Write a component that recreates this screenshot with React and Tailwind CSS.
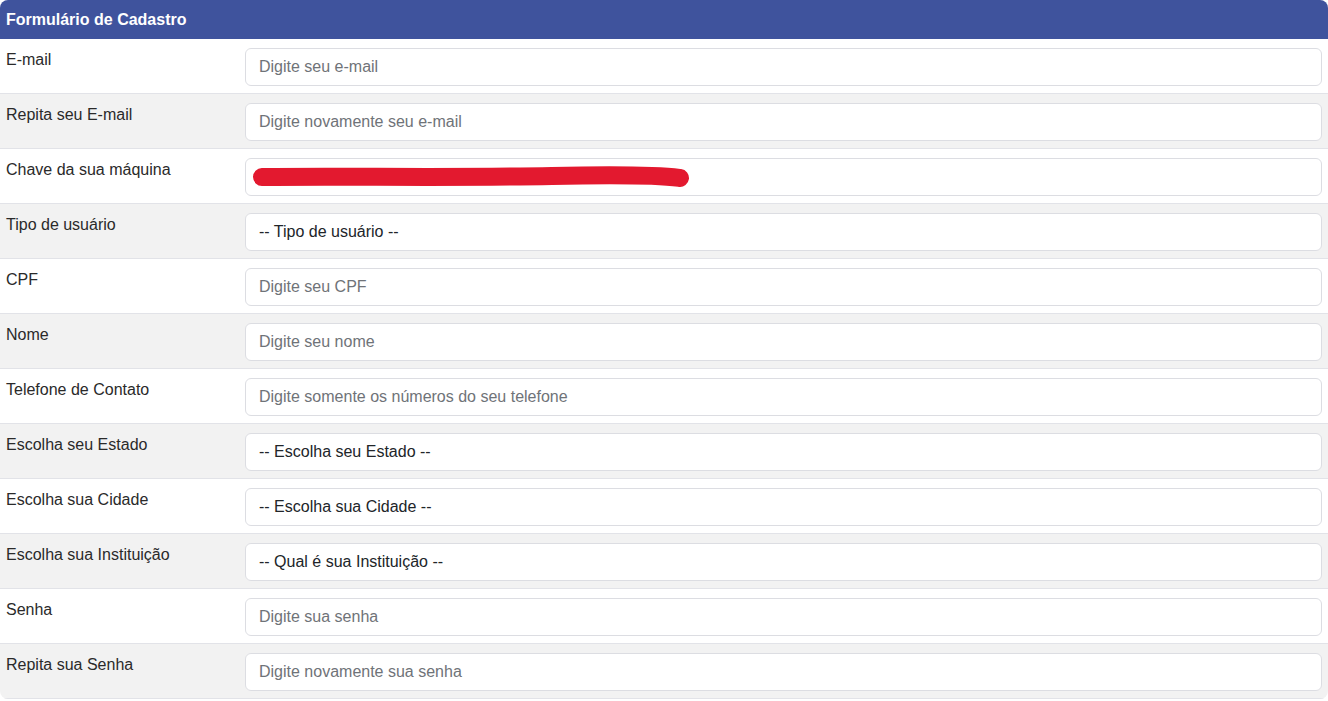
const fields = [
  { label: "E-mail", placeholder: "Digite seu e-mail" },
  { label: "Repita seu E-mail", placeholder: "Digite novamente seu e-mail" },
  { label: "Chave da sua máquina", redacted: true },
  { label: "Tipo de usuário", select: "-- Tipo de usuário --" },
  { label: "CPF", placeholder: "Digite seu CPF" },
  { label: "Nome", placeholder: "Digite seu nome" },
  { label: "Telefone de Contato", placeholder: "Digite somente os números do seu telefone" },
  { label: "Escolha seu Estado", select: "-- Escolha seu Estado --" },
  { label: "Escolha sua Cidade", select: "-- Escolha sua Cidade --" },
  { label: "Escolha sua Instituição", select: "-- Qual é sua Instituição --" },
  { label: "Senha", placeholder: "Digite sua senha", password: true },
  { label: "Repita sua Senha", placeholder: "Digite novamente sua senha", password: true },
];

const box = "w-full h-[38px] rounded-md border border-[#dcdde2] bg-white text-[16px] outline-none";

function Field({ f }) {
  if (f.select) {
    return (
      <select className={box + " px-[13px] appearance-none text-[#212529]"} defaultValue="">
        <option value="">{f.select}</option>
      </select>
    );
  }
  if (f.redacted) {
    // campo com a chave riscada
    return (
      <div className={box + " flex items-center pl-[6px]"}>
        <svg width="446" height="22" viewBox="0 0 446 22">
          <path
            d="M10 11 C 90 10, 200 12, 300 10 S 420 11, 428 12"
            stroke="#e3192f"
            strokeWidth="18"
            strokeLinecap="round"
            fill="none"
          />
        </svg>
      </div>
    );
  }
  return (
    <input
      type={f.password ? "password" : "text"}
      placeholder={f.placeholder}
      className={box + " px-[13px] text-[#212529] placeholder:text-[#6f7378]"}
    />
  );
}

export default function App() {
  return (
    <div className="min-h-screen bg-white" style={{ fontFamily: "'Liberation Sans', Arial, sans-serif" }}>
      <div className="rounded-lg overflow-hidden">
        {/* Header */}
        <div className="h-[39px] bg-[#3f539d] flex items-center px-[6px]">
          <h1 className="text-white font-bold text-[16px]">Formulário de Cadastro</h1>
        </div>

        {/* Rows */}
        {fields.map((f, i) => (
          <div
            key={f.label}
            className={
              "flex h-[55px] pt-[9px] border-b border-[#e2e3e8] " +
              (i % 2 === 1 ? "bg-[#f2f2f2]" : "bg-white")
            }
          >
            <label className="w-[245px] shrink-0 pl-[6px] text-[16px] leading-6 text-[#2a2a2a]">
              {f.label}
            </label>
            <div className="flex-1 pr-[6px]">
              <Field f={f} />
            </div>
          </div>
        ))}
      </div>
    </div>
  );
}
